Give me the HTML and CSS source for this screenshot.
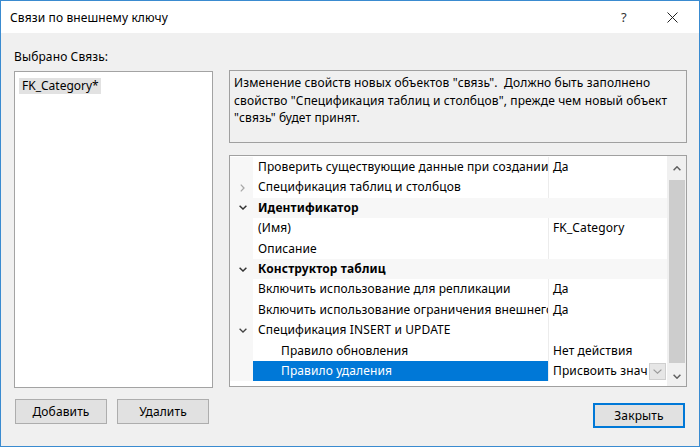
FILE: index.html
```html
<!DOCTYPE html>
<html lang="ru">
<head>
<meta charset="utf-8">
<title>Связи по внешнему ключу</title>
<link rel="stylesheet" href="styles.css">
</head>
<body>
<div class="window">
  <div class="titlebar">
    <span class="title">Связи по внешнему ключу</span>
    <span class="help">?</span>
    <span class="close">
      <svg width="11" height="11" viewBox="0 0 11 11"><path d="M0.5 0.5 L10.5 10.5 M10.5 0.5 L0.5 10.5" stroke="#222" stroke-width="1" fill="none"/></svg>
    </span>
  </div>
  <div class="content">
    <div class="leftcol">
      <div class="label">Выбрано Связь:</div>
      <div class="listbox">
        <div class="listitem">FK_Category*</div>
      </div>
      <div class="btnrow">
        <button class="btn">Добавить</button>
        <button class="btn">Удалить</button>
      </div>
    </div>
    <div class="rightcol">
      <div class="info">Изменение свойств новых объектов "связь".&nbsp; Должно быть заполнено свойство "Спецификация таблиц и столбцов", прежде чем новый объект "связь" будет принят.</div>
      <div class="pgrid">
        <div class="rows">
          <div class="row">
            <div class="gut"></div>
            <div class="name">Проверить существующие данные при создании</div>
            <div class="val">Да</div>
          </div>
          <div class="row">
            <div class="gut"><svg width="5" height="8" viewBox="0 0 5 8"><polyline points="0.8,0.6 4,4 0.8,7.4" fill="none" stroke="#a8a8a8" stroke-width="1.3"/></svg></div>
            <div class="name">Спецификация таблиц и столбцов</div>
            <div class="val"></div>
          </div>
          <div class="row cat">
            <div class="gut"><svg width="8" height="5" viewBox="0 0 8 5"><polyline points="0.6,0.8 4,4 7.4,0.8" fill="none" stroke="#333" stroke-width="1.5"/></svg></div>
            <div class="name">Идентификатор</div>
          </div>
          <div class="row">
            <div class="gut"></div>
            <div class="name">(Имя)</div>
            <div class="val">FK_Category</div>
          </div>
          <div class="row">
            <div class="gut"></div>
            <div class="name">Описание</div>
            <div class="val"></div>
          </div>
          <div class="row cat">
            <div class="gut"><svg width="8" height="5" viewBox="0 0 8 5"><polyline points="0.6,0.8 4,4 7.4,0.8" fill="none" stroke="#333" stroke-width="1.5"/></svg></div>
            <div class="name">Конструктор таблиц</div>
          </div>
          <div class="row">
            <div class="gut"></div>
            <div class="name">Включить использование для репликации</div>
            <div class="val">Да</div>
          </div>
          <div class="row">
            <div class="gut"></div>
            <div class="name">Включить использование ограничения внешнего</div>
            <div class="val">Да</div>
          </div>
          <div class="row">
            <div class="gut"><svg width="8" height="5" viewBox="0 0 8 5"><polyline points="0.6,0.8 4,4 7.4,0.8" fill="none" stroke="#444" stroke-width="1.3"/></svg></div>
            <div class="name">Спецификация INSERT и UPDATE</div>
            <div class="val"></div>
          </div>
          <div class="row">
            <div class="gut"></div>
            <div class="name sub">Правило обновления</div>
            <div class="val">Нет действия</div>
          </div>
          <div class="row">
            <div class="gut"></div>
            <div class="name sub selected">Правило удаления</div>
            <div class="val editing">
              <span class="valtext">Присвоить знач</span>
              <span class="dropbtn"><svg width="9" height="5" viewBox="0 0 9 5"><polyline points="0.6,0.6 4.5,4.2 8.4,0.6" fill="none" stroke="#9a9a9a" stroke-width="1.2"/></svg></span>
            </div>
          </div>
        </div>
        <div class="scrollbar">
          <div class="arrow"><svg width="8" height="5" viewBox="0 0 8 5"><polyline points="0.6,4.2 4,0.8 7.4,4.2" fill="none" stroke="#606060" stroke-width="1.5"/></svg></div>
          <div class="thumb"></div>
          <div class="arrow"><svg width="8" height="5" viewBox="0 0 8 5"><polyline points="0.6,0.8 4,4.2 7.4,0.8" fill="none" stroke="#606060" stroke-width="1.5"/></svg></div>
        </div>
      </div>
      <div class="closerow">
        <button class="btn default">Закрыть</button>
      </div>
    </div>
  </div>
</div>
</body>
</html>
```

FILE: styles.css
```css
* { box-sizing: border-box; }
html, body { margin: 0; padding: 0; }
body {
  font-family: "Noto Sans", "Open Sans", sans-serif;
  font-size: 12px;
  letter-spacing: 0.12px;
  color: #000;
  background: #fff;
}
.window {
  width: 700px;
  height: 447px;
  border: 1px solid #3a8bd0;
  display: flex;
  flex-direction: column;
  background: #f0f0f0;
  overflow: hidden;
}
.titlebar {
  height: 32px;
  background: #fff;
  display: flex;
  align-items: center;
  padding-left: 9px;
  flex: none;
}
.title { flex: 1; font-size: 12px; }
.help { width: 20px; text-align: center; color: #333; font-size: 13px; margin-right: 33px; }
.close { width: 14px; display: flex; align-items: center; margin-right: 18px; }
.content {
  display: grid;
  grid-template-columns: 199px 458px;
  column-gap: 16px;
  padding: 16px 12px 0 13px;
}
.leftcol, .rightcol { display: flex; flex-direction: column; }
.label { height: 16px; line-height: 16px; }
.listbox {
  margin-top: 6px;
  height: 317px;
  background: #fff;
  border: 1px solid #a3a3a3;
  padding: 5px 0 0 4px;
}
.listitem {
  display: inline-block;
  height: 16px;
  line-height: 15px;
  padding: 0 2px 0 3px;
  background: #e2e2e2;
  letter-spacing: 0;
}
.btnrow { margin-top: 11px; display: flex; gap: 10px; padding-left: 1px; }
.btn {
  width: 92px;
  height: 25px;
  background: #e1e1e1;
  border: 1px solid #adadad;
  font-family: inherit;
  font-size: 12px;
  letter-spacing: inherit;
  color: #000;
  padding: 0;
}
.btn.default { border: 2px solid #0078d7; }
.info {
  margin-top: 21px;
  height: 73px;
  border: 1px solid #a0a0a0;
  padding: 3px 4px 0 4px;
  line-height: 17.6px;
}
.pgrid {
  margin-top: 12px;
  height: 232px;
  border: 1px solid #a0a0a0;
  background: #fff;
  display: flex;
  padding-top: 1px;
}
.rows { flex: 1; min-width: 0; }
.row {
  display: grid;
  grid-template-columns: 23px 295px 1fr;
  height: 20.4px;
  line-height: 20px;
}
.gut {
  background: #f7f7f7;
  display: flex;
  align-items: center;
  justify-content: center;
  padding-left: 2px;
}
.name {
  padding-left: 5px;
  white-space: nowrap;
  overflow: hidden;
}
.name.sub { padding-left: 28px; }
.name.selected { background: #0078d7; color: #fff; }
.val {
  border-left: 1px solid #ececec;
  padding-left: 4px;
  white-space: nowrap;
  overflow: hidden;
}
.val.editing { display: flex; align-items: center; padding-right: 0; }
.valtext { flex: 1; overflow: hidden; white-space: nowrap; }
.dropbtn {
  flex: none;
  width: 17px;
  height: 17px;
  background: #e6e6e6;
  border: 1px solid #cfcfcf;
  display: flex;
  align-items: center;
  justify-content: center;
  margin-right: 1px;
}
.row.cat { grid-template-columns: 23px 1fr; background: #f7f7f7; }
.row.cat .name { font-weight: bold; }
.scrollbar {
  width: 19px;
  flex: none;
  background: #f0f0f0;
  display: flex;
  flex-direction: column;
  align-items: center;
  margin-top: -1px;
  padding: 0 1px;
}
.arrow { height: 20px; display: flex; align-items: center; justify-content: center; flex: none; }
.arrow:first-child { height: 18px; margin-top: 3px; }
.thumb { width: 16px; flex: 1; background: #cdcdcd; margin: 3px 0 3px; }
.closerow { margin-top: 16px; display: flex; justify-content: flex-end; padding-right: 2px; }
```
